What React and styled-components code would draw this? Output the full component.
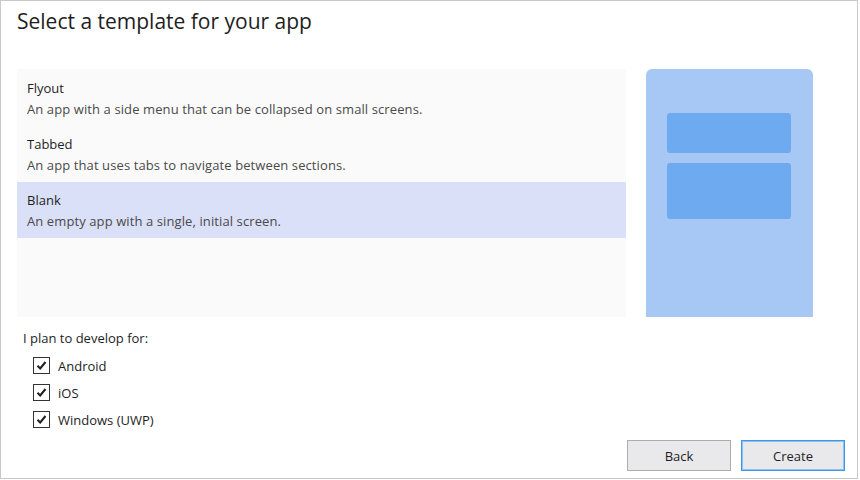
import styled, { createGlobalStyle } from "styled-components";

const GlobalStyle = createGlobalStyle`
  html, body {
    margin: 0;
    padding: 0;
    background: #ffffff;
  }
  body {
    font-family: "Open Sans", "Noto Sans", sans-serif;
    color: #1e1e1e;
  }
`;

const templates = [
  { name: "Flyout", text: "An app with a side menu that can be collapsed on small screens." },
  { name: "Tabbed", text: "An app that uses tabs to navigate between sections." },
  { name: "Blank", text: "An empty app with a single, initial screen.", selected: true },
];

const platforms = ["Android", "iOS", "Windows (UWP)"];

const Frame = styled.div`
  box-sizing: border-box;
  width: 858px;
  height: 479px;
  border: 1px solid #c9c9c9;
  padding: 0 12px 0 16px;
  display: flex;
  flex-direction: column;
`;

const Title = styled.h1`
  margin: 0;
  padding-top: 6px;
  height: 68px;
  box-sizing: border-box;
  font-size: 21px;
  font-weight: 400;
  line-height: 28px;
  color: #1e1e1e;
`;

const Main = styled.div`
  display: flex;
  gap: 20px;
  height: 248px;
`;

const List = styled.div`
  width: 609px;
  background: #fafafa;
  padding-top: 1px;
  box-sizing: border-box;
`;

const Item = styled.div`
  height: 56px;
  box-sizing: border-box;
  padding: 8px 10px 0;
  background: ${(p) => (p.$selected ? "#dae0f8" : "transparent")};
`;

const ItemName = styled.div`
  font-size: 13px;
  line-height: 21px;
  color: #1e1e1e;
`;

const ItemText = styled.div`
  font-size: 13px;
  line-height: 21px;
  color: #4a4a4a;
  letter-spacing: 0.1px;
`;

const Preview = styled.div`
  width: 167px;
  background: #a7c8f5;
  border-radius: 6px 6px 0 0;
  padding: 44px 22px 0 21px;
  box-sizing: border-box;
  display: flex;
  flex-direction: column;
  gap: 10px;
`;

const Block = styled.div`
  height: ${(p) => p.$h}px;
  background: #6eaaef;
  border-radius: 3px;
`;

const Platforms = styled.div`
  padding: 11px 0 0 6px;
`;

const Label = styled.div`
  font-size: 13px;
  line-height: 20px;
  color: #1e1e1e;
  margin-bottom: 4px;
`;

const CheckRow = styled.label`
  display: flex;
  align-items: center;
  gap: 8px;
  height: 27px;
  padding-left: 10px;
  font-size: 13px;
  color: #1e1e1e;
`;

const Box = styled.span`
  width: 15px;
  height: 15px;
  border: 1px solid #333333;
  background: #ffffff;
  display: flex;
  align-items: center;
  justify-content: center;
`;

const Footer = styled.div`
  display: flex;
  justify-content: flex-end;
  gap: 10px;
  margin-top: auto;
  padding-bottom: 7px;
`;

const Button = styled.button`
  width: 104px;
  height: 31px;
  box-sizing: border-box;
  background: #e9e9ec;
  border: 1px solid ${(p) => (p.$primary ? "#3d97ea" : "#adadad")};
  box-shadow: ${(p) => (p.$primary ? "inset 0 0 0 1px #8dc2f3" : "none")};
  font-family: "Open Sans", "Noto Sans", sans-serif;
  font-size: 13px;
  color: #1e1e1e;
  padding: 0;
`;

function Check() {
  return (
    <svg width="11" height="11" viewBox="0 0 11 11">
      <path d="M1.5 5.8 L4.2 8.5 L9.5 2" fill="none" stroke="#1e1e1e" strokeWidth="2" />
    </svg>
  );
}

export default function App() {
  return (
    <>
      <GlobalStyle />
      <Frame>
        <Title>Select a template for your app</Title>
        <Main>
          <List>
            {templates.map((t) => (
              <Item key={t.name} $selected={t.selected}>
                <ItemName>{t.name}</ItemName>
                <ItemText>{t.text}</ItemText>
              </Item>
            ))}
          </List>
          <Preview>
            <Block $h={40} />
            <Block $h={56} />
          </Preview>
        </Main>
        <Platforms>
          <Label>I plan to develop for:</Label>
          {platforms.map((p) => (
            <CheckRow key={p}>
              <Box>
                <Check />
              </Box>
              {p}
            </CheckRow>
          ))}
        </Platforms>
        <Footer>
          <Button>Back</Button>
          <Button $primary>Create</Button>
        </Footer>
      </Frame>
    </>
  );
}
